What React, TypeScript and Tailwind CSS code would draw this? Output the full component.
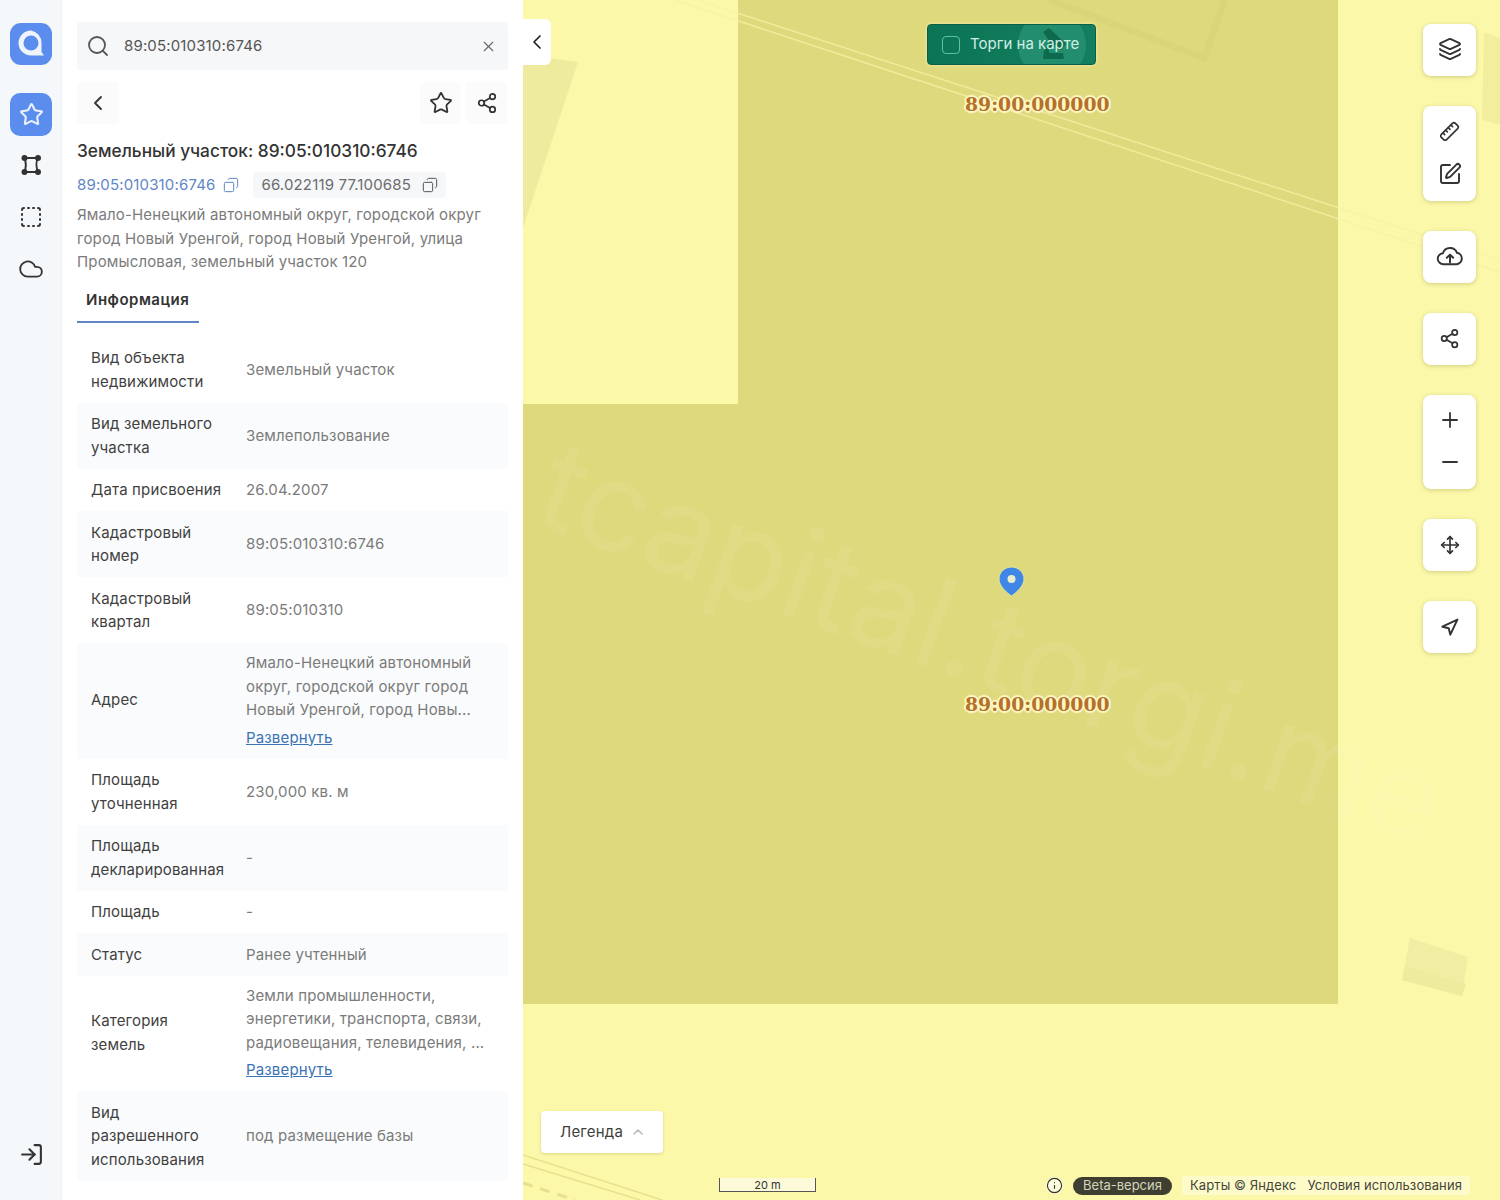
import {
  ChevronLeft,
  ChevronUp,
  Cloud,
  Copy,
  Info,
  Layers,
  LogIn,
  Minus,
  Move,
  Navigation,
  Plus,
  Ruler,
  Search,
  Share2,
  SquareDashed,
  SquarePen,
  Star,
  X,
} from "lucide-react";
import type { ReactNode } from "react";

const Logo = () => (
  <svg width="42" height="42" viewBox="0 0 42 42">
    <rect width="42" height="42" rx="11" fill="#5b8def" />
    <path d="M21 7.500a12.500 12.500 0 1 0 0 25h13l-2.500-3.500V20A12.500 12.500 0 0 0 21 7.500z" fill="#eef3fc" />
    <circle cx="21" cy="20" r="7.500" fill="#5b8def" />
  </svg>
);

const PolygonIcon = () => (
  <svg width="24" height="24" viewBox="0 0 24 24" fill="none" stroke="#333" strokeWidth="2">
    <path d="M6 5h13c-2 3-2 9 0 14H6c1-4 1-10 0-14z" />
    <circle cx="5.500" cy="5" r="2" fill="#333" />
    <circle cx="19" cy="5" r="2" fill="#333" />
    <circle cx="5.500" cy="19" r="2" fill="#333" />
    <circle cx="19" cy="19" r="2" fill="#333" />
  </svg>
);

const UploadCloudIcon = () => (
  <svg width="28" height="28" viewBox="0 0 24 24" fill="none" stroke="currentColor" strokeWidth="1.700" strokeLinecap="round" strokeLinejoin="round">
    <path d="M6.500 19a4.700 4.700 0 0 1-.6-9.400A6.400 6.400 0 0 1 18 9.300 4.900 4.900 0 0 1 17.800 19z" />
    <path d="M12 17.500v-6.500M9.300 13.500 12 10.800l2.700 2.700" />
  </svg>
);

const Sidebar = () => (
  <div className="flex w-[62px] shrink-0 flex-col items-center border-r border-[#eef2f6] bg-[#f4f8fb] pb-[34px] pl-px pt-[23px]">
    <Logo />
    <div className="mt-[28px] flex h-[43px] w-[42px] items-center justify-center rounded-[10px] bg-[#5b8def]">
      <Star size={25} strokeWidth={2} className="text-[#eaf1fd]" />
    </div>
    <div className="mt-[17px] flex h-[24px] items-center justify-center">
      <PolygonIcon />
    </div>
    <div className="mt-[28px] flex h-[24px] items-center justify-center">
      <SquareDashed size={24} strokeWidth={2} className="text-[#333]" />
    </div>
    <div className="mt-[28px] flex h-[24px] items-center justify-center">
      <Cloud size={26} strokeWidth={1.7} className="text-[#333]" />
    </div>
    <div className="mt-auto flex h-[24px] items-center justify-center">
      <LogIn size={25} strokeWidth={2} className="text-[#333]" />
    </div>
  </div>
);

type RowData = {
  label: ReactNode;
  value: ReactNode;
  more?: boolean;
};

const rows: RowData[] = [
  { label: <>Вид объекта<br />недвижимости</>, value: "Земельный участок" },
  { label: <>Вид земельного<br />участка</>, value: "Землепользование" },
  { label: "Дата присвоения", value: "26.04.2007" },
  { label: <>Кадастровый<br />номер</>, value: "89:05:010310:6746" },
  { label: <>Кадастровый<br />квартал</>, value: "89:05:010310" },
  {
    label: "Адрес",
    value: <>Ямало-Ненецкий автономный<br />округ, городской округ город<br />Новый Уренгой, город Новы...</>,
    more: true,
  },
  { label: <>Площадь<br />уточненная</>, value: "230,000 кв. м" },
  { label: <>Площадь<br />декларированная</>, value: "-" },
  { label: "Площадь", value: "-" },
  { label: "Статус", value: "Ранее учтенный" },
  {
    label: <>Категория<br />земель</>,
    value: <>Земли промышленности,<br />энергетики, транспорта, связи,<br />радиовещания, телевидения, ...</>,
    more: true,
  },
  { label: <>Вид<br />разрешенного<br />использования</>, value: "под размещение базы" },
];

const InfoRow = ({ row, striped }: { row: RowData; striped: boolean }) => (
  <div className={`flex items-center pl-[14px] pr-[10px] ${row.more ? "pb-[9.5px] pt-[8px]" : "py-[9.5px]"} ${striped ? "bg-[#fafbfc]" : "bg-white"}`}>
    <div className="w-[155px] shrink-0 text-[#3f3f3f]">{row.label}</div>
    <div className="text-[#7b7b7b]">
      {row.value}
      {row.more && <div className="mt-[4px] text-[#3a73b5] underline">Развернуть</div>}
    </div>
  </div>
);

const Panel = () => (
  <div className="flex w-[461px] shrink-0 flex-col bg-white px-[15px] text-[15px] leading-[23.5px] tracking-[0.15px]">
    <div className="mt-[22px] flex h-[48px] items-center rounded-[4px] bg-[#f5f7f9] pl-[9px] pr-[11px] text-[#555]">
      <Search size={24} strokeWidth={1.8} className="text-[#555]" />
      <span className="ml-[14px] flex-1">89:05:010310:6746</span>
      <X size={17} strokeWidth={1.6} className="text-[#666]" />
    </div>

    <div className="mt-[12px] flex h-[42px] items-center">
      <div className="flex h-[42px] w-[42px] items-center justify-center rounded-[4px] bg-[#fbfbfb]">
        <ChevronLeft size={24} strokeWidth={1.8} className="text-[#333]" />
      </div>
      <div className="ml-auto flex h-[42px] w-[41px] items-center justify-center rounded-[4px] bg-[#fbfbfb]">
        <Star size={24} strokeWidth={1.8} className="text-[#333]" />
      </div>
      <div className="ml-[5px] mr-px flex h-[42px] w-[41px] items-center justify-center rounded-[4px] bg-[#fbfbfb]">
        <Share2 size={22} strokeWidth={1.9} className="text-[#333]" />
      </div>
    </div>

    <div className="mt-[15px] h-[24px] text-[17.3px] font-medium leading-[24px] tracking-normal text-[#333]">
      Земельный участок: 89:05:010310:6746
    </div>

    <div className="mt-[9px] flex h-[26px] items-center">
      <span className="text-[#5f87c7]">89:05:010310:6746</span>
      <Copy size={16} strokeWidth={1.5} className="ml-[8px] -scale-x-100 text-[#5f87c7]" />
      <div className="ml-[14px] flex h-[26px] w-[193px] items-center rounded-[4px] bg-[#f5f7f9] pl-[8px] text-[#6c6c6c]">
        <span>66.022119 77.100685</span>
        <Copy size={16} strokeWidth={1.5} className="ml-[11px] -scale-x-100 text-[#555]" />
      </div>
    </div>

    <div className="mt-[5px] text-[#7b7b7b]">
      Ямало-Ненецкий автономный округ, городской округ
      <br />
      город Новый Уренгой, город Новый Уренгой, улица
      <br />
      Промысловая, земельный участок 120
    </div>

    <div className="h-[49px] w-[122px] border-b-2 border-[#5f87c7] pl-[9px] pt-[14px] font-semibold tracking-[0.5px] text-[#333]">
      Информация
    </div>

    <div className="mt-[14px]">
      {rows.map((row, i) => (
        <InfoRow key={i} row={row} striped={i % 2 === 1} />
      ))}
    </div>
  </div>
);

const MapLayer = () => (
  <svg className="absolute inset-0 h-full w-full" viewBox="523 0 977 1200" preserveAspectRatio="none">
    <rect x="523" y="0" width="977" height="1200" fill="#fbf8a9" />
    <path d="M523 55 L578 62 L523 228 Z" fill="#eeeb9f" />
    <path d="M1484 32 L1500 38 L1500 125 L1482 120 Z" fill="#f1ee9e" />
    <path d="M1410 938 L1468 957 L1462 996 L1402 980 Z" fill="#f0eea3" />
    <path d="M1405 966 L1466 984 L1462 996 L1402 980 Z" fill="#eeeb9e" />
    <path d="M738 0 H1338 V1004 H523 V404 H738 Z" fill="#dfd97e" />
    <path d="M1050 0 L1204 58 L1225 0" fill="none" stroke="#dbd579" strokeWidth="7" />
    <g fill="none" stroke="#f6f3a6" strokeWidth="1.500" opacity="0.75">
      <path d="M675 0 L1500 272" />
      <path d="M697 0 L1500 260" />
    </g>
    <g fill="none" stroke="#e6e18d" strokeWidth="1.500">
      <path d="M523 1155 L662 1200" />
      <path d="M523 1164 L640 1200" />
      <path d="M523 1183 L575 1200" strokeWidth="3" strokeDasharray="10 8" />
    </g>
    <text
      x="530"
      y="522"
      transform="rotate(20 530 522)"
      fontFamily="Inter, sans-serif"
      fontSize="125"
      fill="#ffffff"
      opacity="0.06"
    >
      tcapital.torgi.me
    </text>
  </svg>
);

const CadastreLabel = ({ className }: { className: string }) => (
  <div
    className={`absolute text-[18.8px] font-bold leading-[24px] text-[#b5702c] [font-family:'DejaVu_Serif',serif] [text-shadow:-2px_0_1px_#fdf9c4,2px_0_1px_#fdf9c4,0_-2px_1px_#fdf9c4,0_2px_1px_#fdf9c4,-1px_-1px_1px_#fdf9c4,1px_1px_1px_#fdf9c4,1px_-1px_1px_#fdf9c4,-1px_1px_1px_#fdf9c4] ${className}`}
  >
    89:00:000000
  </div>
);

const ToolCard = ({ children, className }: { children: ReactNode; className: string }) => (
  <div className={`flex w-[53px] flex-col items-center justify-center rounded-[8px] bg-white shadow-[0_1px_4px_rgba(120,110,40,0.3)] ${className}`}>
    {children}
  </div>
);

const Toolbar = () => (
  <div className="absolute right-[24px] top-[24px] flex flex-col gap-[30px] text-[#333]">
    <ToolCard className="h-[52px] pb-[2px]"><Layers size={24} strokeWidth={1.9} /></ToolCard>
    <ToolCard className="h-[95px] gap-[20px]">
      <Ruler size={21} strokeWidth={1.9} className="-scale-x-100" />
      <SquarePen size={24} strokeWidth={1.9} />
    </ToolCard>
    <ToolCard className="h-[52px] pb-[3px]"><UploadCloudIcon /></ToolCard>
    <ToolCard className="h-[52px] pb-[2px]"><Share2 size={21} strokeWidth={2} /></ToolCard>
    <ToolCard className="h-[94px] gap-[18px] pb-[2px]">
      <Plus size={24} strokeWidth={1.8} />
      <Minus size={24} strokeWidth={1.8} />
    </ToolCard>
    <ToolCard className="h-[52px]"><Move size={20} strokeWidth={2} /></ToolCard>
    <ToolCard className="h-[52px]"><Navigation size={19} strokeWidth={2.5} /></ToolCard>
  </div>
);

const TorgiButton = () => (
  <div className="absolute left-[404px] top-[24px] flex h-[41px] w-[169px] items-center overflow-hidden rounded-[4px] border border-[#0b5f45] bg-gradient-to-r from-[#0b7455] to-[#137f60] pl-[14px] shadow-[0_0_3px_rgba(250,250,190,0.9)]">
    <svg className="absolute left-[88px] top-0 h-[41px] w-[80px]" viewBox="0 0 80 41">
      <circle cx="36" cy="20" r="34" fill="#2a9474" opacity="0.75" />
      <path d="M27 7 L33 3 L50 19 L45 25 L38 19 L33 24 L33 28 L47 28 L48 34 L27 34 L28 26 L34 17 Z" fill="#0d6a4d" />
    </svg>
    <span className="relative h-[18px] w-[18px] rounded-[4px] border border-[#5cc2a2]" />
    <span className="relative ml-[10px] text-[15px] text-[#d2eee4]">Торги на карте</span>
  </div>
);

const Pin = () => (
  <svg className="absolute left-[475px] top-[566px]" width="27" height="31" viewBox="0 0 27 31">
    <path d="M13.500 1C6.600 1 1 6.400 1 13c0 7 7.400 13.500 12.500 17C18.600 26.500 26 20 26 13 26 6.400 20.400 1 13.500 1z" fill="#3f87e6" stroke="#e6e59a" strokeWidth="1" />
    <circle cx="13.500" cy="13" r="4" fill="#e8edd0" />
  </svg>
);

const MapArea = () => (
  <div className="relative flex-1 overflow-hidden text-[#3f3f3a]">
    <MapLayer />

    <div className="absolute left-0 top-[19px] flex h-[46px] w-[28px] items-center justify-center rounded-r-[6px] bg-white">
      <ChevronLeft size={24} strokeWidth={1.7} className="text-[#222]" />
    </div>

    <TorgiButton />
    <CadastreLabel className="left-[442px] top-[92px]" />
    <CadastreLabel className="left-[442px] top-[692px]" />
    <Pin />
    <Toolbar />

    <div className="absolute left-[18px] top-[1111px] flex h-[42px] w-[122px] items-center rounded-[4px] bg-white pl-[19px] text-[15px] tracking-[0.2px] shadow-[0_1px_3px_rgba(120,110,40,0.25)]">
      Легенда
      <ChevronUp size={16} strokeWidth={2.6} className="ml-[7px] text-[#bdbdbd]" />
    </div>

    <div className="absolute left-[196px] top-[1178px] flex h-[14px] w-[97px] items-center justify-center border-x border-b border-[#555] bg-[#fcfad8] text-[11px] leading-[12px] text-[#333]">
      20 m
    </div>

    <div className="absolute bottom-[5px] left-[523px] flex h-[19px] items-center text-[13px]">
      <Info size={17} strokeWidth={1.6} className="rounded-full bg-[#fdfcdc] text-[#333]" />
      <span className="ml-[10px] flex h-[18px] w-[99px] items-center justify-center rounded-full bg-[#3f3f31] text-[#d4d4bd]">
        Beta-версия
      </span>
      <span className="ml-[10px] flex h-[19px] items-center gap-[11px] rounded-[4px] bg-[#fdfbc9] px-[8px] tracking-[0.1px] text-[#45453c]">
        <span>Карты © Яндекс</span>
        <span>Условия использования</span>
      </span>
    </div>
  </div>
);

const App = () => (
  <div className="flex h-[1200px] w-full overflow-hidden font-['Inter',sans-serif]">
    <Sidebar />
    <Panel />
    <MapArea />
  </div>
);

export default App;
